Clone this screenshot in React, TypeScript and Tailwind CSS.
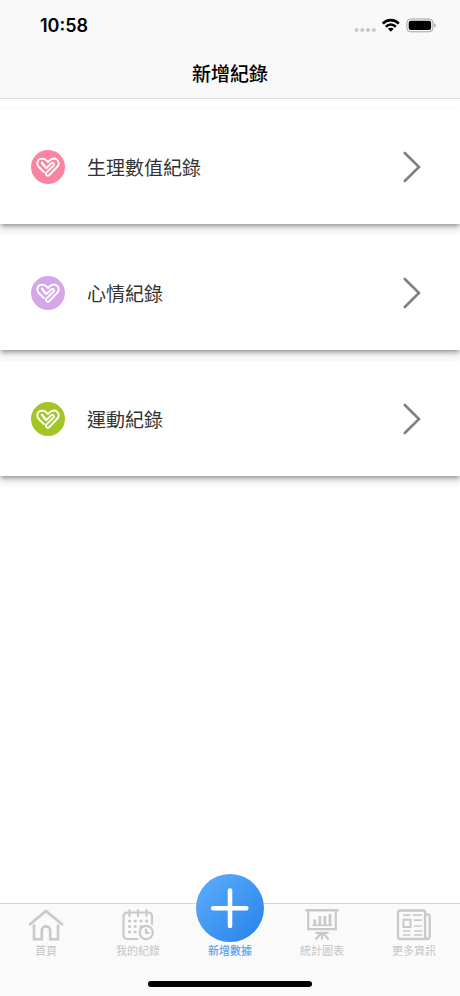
import type { ReactNode } from "react";

const records = [
  { title: "生理數值紀錄", color: "bg-[#fb84a2]" },
  { title: "心情紀錄", color: "bg-[#d5a6ea]" },
  { title: "運動紀錄", color: "bg-[#a3c526]" },
];

const HeartIcon = () => (
  <svg
    className="h-[34px] w-[34px]"
    viewBox="0 0 34 34"
    fill="none"
    stroke="white"
    strokeWidth="1.9"
    strokeLinecap="round"
    strokeLinejoin="round"
  >
    <path d="M12.8 22 L7.8 17 C5.4 14.4 6 10.6 8.7 9.2 C11.7 7.8 14.4 9 17 11.8" />
    <path d="M17 11.8 C19.8 8.8 22.6 7.8 25.4 9.2 C28.5 11.1 28.3 14.6 26 17 L18.4 25 C16.4 26.8 13.8 24.4 15.5 22.4 L22.4 15.8 C24 14 22 11.8 20.1 13.4 L15.4 18" />
    <path d="M11 12.8 L14.4 17.2" strokeWidth="2.4" />
  </svg>
);

const HomeIcon = () => (
  <svg className="h-9 w-9" viewBox="0 0 36 36" fill="none" stroke="#c9c9c9" strokeWidth="2.6">
    <path d="M2 17.3 L18 4 L34 17.3" strokeLinecap="round" />
    <path d="M6 17.5 V32.3 H13.8 V23.5 C13.8 18 22.2 18 22.2 23.5 V32.3 H30 V17.5" />
  </svg>
);

const CalendarIcon = () => (
  <svg className="h-9 w-9" viewBox="0 0 36 36" fill="none" stroke="#c9c9c9" strokeWidth="2.2">
    <path d="M17.5 32 H8 Q3.5 32 3.5 28 V9.5 Q3.5 5.5 8 5.5 H28 Q32 5.5 32 9.5 V17" strokeLinecap="round" />
    <path d="M9.5 3 V9 M18 3 V9 M26.5 3 V9" strokeLinecap="round" />
    <path
      d="M9.5 14 h.01 M15.2 14 h.01 M21 14 h.01 M26.7 14 h.01 M9.5 19.5 h.01 M15.2 19.5 h.01 M21 19.5 h.01 M9.5 25 h.01 M15.2 25 h.01"
      strokeWidth="3.2"
      strokeLinecap="round"
    />
    <circle cx="26.2" cy="25.5" r="6.6" />
    <path d="M26 21.7 V26 H29.5" />
  </svg>
);

const ChartIcon = () => (
  <svg className="h-9 w-9" viewBox="0 0 36 36" fill="none" stroke="#c9c9c9" strokeWidth="2.2">
    <path d="M1.2 3.3 H34.8" strokeWidth="2.4" />
    <path d="M4.2 4.2 V22.2 H31.8 V4.2" />
    <path d="M8.5 18.3 H28" strokeWidth="1.6" />
    <path d="M10.7 18.5 V12.5 M15.8 18.5 V9 M20.9 18.5 V9 M26 18.5 V7" strokeWidth="2.7" />
    <path d="M11.5 25.8 H24.5 M18 25.5 V32.5 M17 26.3 L11.5 32.5 M19 26.3 L24.7 32.5" />
  </svg>
);

const NewsIcon = () => (
  <svg className="h-9 w-9" viewBox="0 0 36 36" fill="none" stroke="#c9c9c9" strokeWidth="2.3">
    <path d="M29 5.5 Q29 3.5 27 3.5 H4 Q2 3.5 2 5.5 V29.5 Q2 32 4.5 32 H31.5 Q29 31.5 29 29 V5.5 M29 7.5 H31.5 Q33.7 7.5 33.7 9.5 V29.5 Q33.7 32 31.3 32" />
    <path d="M7.5 12.7 H14.5 V20 H7.5 Z" strokeWidth="2" />
    <path d="M7 8.2 H14.5 M17 8.2 H26 M18 13.2 H26 M18 19 H26 M7 24 H14.5 M18 24 H26 M7 28 H14.5 M18 28 H26" strokeWidth="1.7" />
  </svg>
);

const Tab = ({ label, children }: { label: string; children: ReactNode }) => (
  <div className="flex w-[92px] flex-col items-center pt-[3px] text-[#c5c5c5]">
    {children}
    <span className="text-[11px] leading-4">{label}</span>
  </div>
);

export default function App() {
  return (
    <div className="flex h-[996px] w-[460px] flex-col overflow-hidden bg-white font-['Liberation_Sans','Noto_Sans_CJK_TC',sans-serif]">
      <header className="flex h-[99px] shrink-0 flex-col border-b border-[#dedede] bg-[#f9f9f9]">
        <div className="flex h-[50px] items-center justify-between pr-[24px] pl-10">
          <span className="font-['Inter',sans-serif] text-[18px] font-semibold text-black">10:58</span>
          <div className="flex items-center pt-0.5">
            <svg className="h-5 w-[82px]" viewBox="0 0 82 20" fill="none">
              <g fill="#c9c9c9">
                <circle cx="2.5" cy="14" r="2" />
                <circle cx="8.3" cy="14" r="2" />
                <circle cx="14" cy="14" r="2" />
                <circle cx="19.8" cy="14" r="2" />
              </g>
              <g stroke="black" strokeWidth="2.6">
                <path d="M28.8 7.6 C33.2 2.9 40.4 2.9 44.8 7.6" />
                <path d="M31.8 10.8 C34.7 7.8 38.9 7.8 41.8 10.8" />
              </g>
              <path d="M36.8 15.8 L33.9 12.8 C35.5 11.3 38.1 11.3 39.7 12.8 Z" fill="black" />
              <rect x="52.9" y="3" width="26" height="12.8" rx="3.8" stroke="#a3a3a3" />
              <rect x="54.7" y="4.8" width="22.4" height="9.2" rx="2.2" fill="black" />
              <path d="M80.2 7.3 C82.2 8 82.2 10.8 80.2 11.5 Z" fill="#a3a3a3" />
            </svg>
          </div>
        </div>
        <h1 className="pt-[11px] text-center text-[19px] leading-7 font-medium text-black">新增紀錄</h1>
      </header>

      <main className="flex flex-1 flex-col gap-[11px] pt-[10px]">
        {records.map((record) => (
          <div
            key={record.title}
            className="flex h-[115px] items-center bg-white pr-[38px] pl-[31px] shadow-[0_3px_4px_-1px_rgba(0,0,0,0.32),0_5px_7px_1px_rgba(0,0,0,0.12)]"
          >
            <div className={`h-[34px] w-[34px] rounded-full ${record.color}`}>
              <HeartIcon />
            </div>
            <span className="ml-[22px] flex-1 pt-[4px] text-[19px] leading-7 text-[#333]">{record.title}</span>
            <svg className="h-8 w-5" viewBox="0 0 20 32" fill="none" stroke="#808080" strokeWidth="2.6">
              <path d="M2.8 2 L17 16 L2.8 30" strokeLinecap="round" />
            </svg>
          </div>
        ))}
      </main>

      <nav className="relative flex h-[93px] shrink-0 border-t border-[#d5d5d5] bg-[#fafafa]">
        <Tab label="首頁">
          <HomeIcon />
        </Tab>
        <Tab label="我的紀錄">
          <CalendarIcon />
        </Tab>
        <div className="flex w-[92px] flex-col items-center">
          <div className="-mt-[30.5px] h-[68px] w-[68px] shrink-0 rounded-full bg-linear-to-br from-[#5eaefb] to-[#2481e9]">
            <svg className="h-full w-full" viewBox="0 0 68 68" stroke="white" strokeWidth="4.6" strokeLinecap="round">
              <path d="M34 16.5 V52 M17.2 34.2 H50.3" />
            </svg>
          </div>
          <span className="mt-px text-[11px] leading-4 font-medium text-[#57a5f4]">新增數據</span>
        </div>
        <Tab label="統計圖表">
          <ChartIcon />
        </Tab>
        <Tab label="更多資訊">
          <NewsIcon />
        </Tab>
        {/* home indicator */}
        <div className="absolute bottom-[9px] left-[148px] h-[6px] w-[164px] rounded-full bg-black" />
      </nav>
    </div>
  );
}
